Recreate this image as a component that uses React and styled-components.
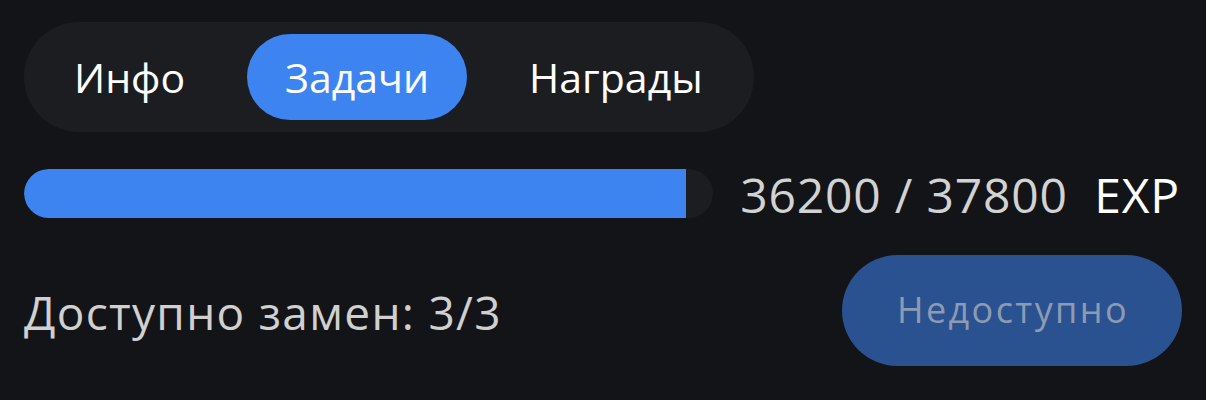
import styled, { createGlobalStyle } from "styled-components";

const GlobalStyle = createGlobalStyle`
  html, body {
    margin: 0;
    background: #131417;
  }
  body {
    font-family: "Open Sans", "Noto Sans", sans-serif;
  }
`;

const Page = styled.div`
  width: 1206px;
  height: 400px;
  box-sizing: border-box;
  padding: 22px 24px 0 24px;
  display: flex;
  flex-direction: column;
  gap: 37px;
`;

const Tabs = styled.div`
  align-self: flex-start;
  display: flex;
  gap: 24px;
  padding: 12px 13px 12px 12px;
  background: #1c1d21;
  border-radius: 55px;
`;

const Tab = styled.div`
  height: 86px;
  padding: 0 38px;
  display: flex;
  align-items: center;
  border-radius: 43px;
  font-size: 41px;
  color: #ffffff;
  background: ${(p) => (p.active ? "#3d84f1" : "transparent")};
`;

const ProgressRow = styled.div`
  display: flex;
  align-items: center;
  gap: 27px;
  height: 49px;
`;

const Track = styled.div`
  flex: 1;
  height: 49px;
  background: #1c1d21;
  border-radius: 25px;
  overflow: hidden;
`;

const Fill = styled.div`
  height: 100%;
  background: #3d84f1;
  border-radius: 25px 0 0 25px;
`;

const Exp = styled.div`
  font-size: 48px;
  line-height: 49px;
  letter-spacing: 0.8px;
  color: #d2d2d2;
  white-space: pre;
  padding: 2px 2px 0 0;

  span {
    color: #ffffff;
  }
`;

const Footer = styled.div`
  display: flex;
  align-items: center;
  justify-content: space-between;
`;

const Swaps = styled.div`
  font-size: 46px;
  letter-spacing: 1.3px;
  color: #d0d0d0;
  padding-top: 3px;
`;

const Unavailable = styled.button`
  width: 340px;
  height: 111px;
  border: none;
  border-radius: 56px;
  background: #2a5190;
  color: #8c9bb2;
  font-family: inherit;
  font-size: 36px;
  font-weight: 500;
  letter-spacing: 2.4px;
  padding: 0 0 2px 2px;
`;

const tabs = ["Инфо", "Задачи", "Награды"];

export default function App() {
  const current = 36200;
  const total = 37800;
  // the visible fill stops short of the track end
  const pct = (662 / 689) * 100;

  return (
    <>
      <GlobalStyle />
      <Page>
        <Tabs>
          {tabs.map((t) => (
            <Tab key={t} active={t === "Задачи"}>
              {t}
            </Tab>
          ))}
        </Tabs>
        <ProgressRow>
          <Track>
            <Fill style={{ width: `${pct}%` }} />
          </Track>
          <Exp>
            {current} / {total}  <span>EXP</span>
          </Exp>
        </ProgressRow>
        <Footer>
          <Swaps>Доступно замен: 3/3</Swaps>
          <Unavailable disabled>Недоступно</Unavailable>
        </Footer>
      </Page>
    </>
  );
}
